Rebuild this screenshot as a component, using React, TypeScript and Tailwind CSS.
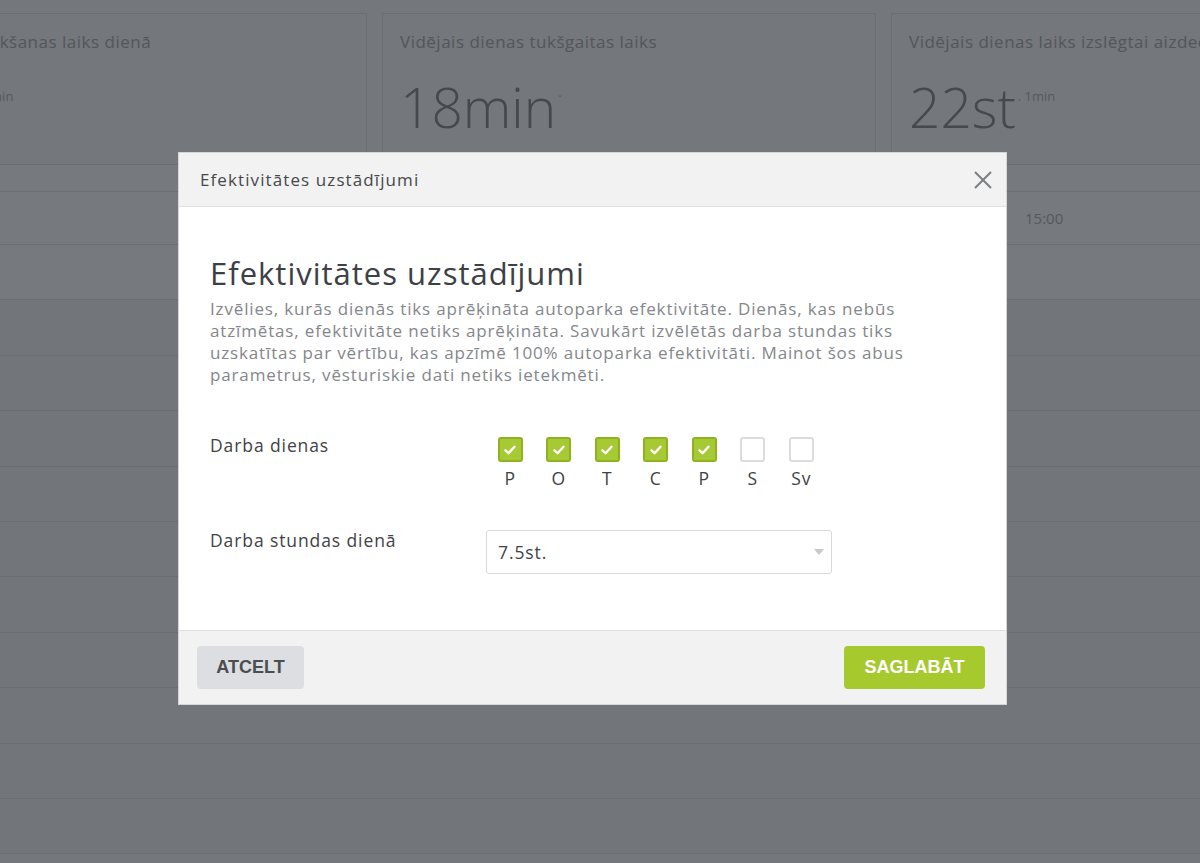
import React from 'react';

type StatCardProps = {
  title: string;
  value: string;
  sup: string;
  className?: string;
};

function StatCard({ title, value, sup, className = '' }: StatCardProps) {
  return (
    <div className={`h-[152px] w-[494px] shrink-0 border border-[#6a6d72] px-[17px] pt-[16px] ${className}`}>
      <div className="text-[17px] leading-[24px] tracking-[0.5px] text-[#53565b]">{title}</div>
      <div className="mt-[21px] flex items-start">
        <span className="text-[55px] font-light leading-[64px] text-[#45484d]">{value}</span>
        <span className="mt-[12px] ml-[2px] text-[13px] text-[#56595e]">{sup}</span>
      </div>
    </div>
  );
}

const days = [
  { label: 'P', on: true },
  { label: 'O', on: true },
  { label: 'T', on: true },
  { label: 'C', on: true },
  { label: 'P', on: true },
  { label: 'S', on: false },
  { label: 'Sv', on: false },
];

function DayBox({ label, on }: { label: string; on: boolean }) {
  return (
    <div className="flex w-[48.5px] flex-col items-center">
      {on ? (
        <div className="flex h-[25px] w-[25px] items-center justify-center rounded-[3px] border-2 border-[#8db320] bg-[#a6c934]">
          <svg width="14" height="14" viewBox="0 0 14 14" fill="none">
            <path d="M2.5 7.3 L5.6 10.2 L11.5 3.8" stroke="white" strokeWidth="2.4" strokeLinecap="round" strokeLinejoin="round" />
          </svg>
        </div>
      ) : (
        <div className="h-[25px] w-[25px] rounded-[3px] border-2 border-[#dcdcdc] bg-white" />
      )}
      <span className="mt-[4px] text-[17.5px] leading-[24px] tracking-[0.9px] text-[#3f4246]">{label}</span>
    </div>
  );
}

export default function App() {
  const rows = Array.from({ length: 11 });

  return (
    <div className="relative h-[863px] w-[1200px] overflow-hidden bg-[#74777c] font-['Open_Sans',sans-serif]">
      {/* background dashboard */}
      <div className="flex gap-[15px] pt-[13px] ml-[-127px]">
        <StatCard title="Vidējais braukšanas laiks dienā" value="3st" sup=". 41min" />
        <StatCard title="Vidējais dienas tukšgaitas laiks" value="18min" sup="·" />
        <StatCard title="Vidējais dienas laiks izslēgtai aizdedzei" value="22st" sup=". 1min" />
      </div>
      <div className="h-[27px] border-b border-[#6a6d72] bg-[#76797e]" />
      <div className="flex h-[53px] items-center border-b border-[#6a6d72] bg-[#76797e] pl-[1025px] text-[15px] text-[#55585c]">
        15:00
      </div>
      {rows.map((_, i) => (
        <div key={i} className={`h-[55.4px] border-b border-[#6a6d72] ${i === 0 ? 'bg-[#76797e]' : 'bg-[#72757a]'}`} />
      ))}

      {/* modal */}
      <div className="absolute inset-0">
        <div className="ml-[178px] mt-[152px] w-[829px] border border-[#d6d6d6] bg-white">
          <div className="flex h-[54px] items-center justify-between border-b border-[#e0e0e0] bg-[#f2f2f2] pl-[21px] pr-[13px]">
            <span className="text-[17px] tracking-[1.1px] text-[#45484c]">Efektivitātes uzstādījumi</span>
            <svg width="20" height="20" viewBox="0 0 20 20" fill="none">
              <path d="M2 2 L18 18 M18 2 L2 18" stroke="#7c7f83" strokeWidth="2" />
            </svg>
          </div>

          <div className="px-[31px] pt-[46px] pb-[56px]">
            <h1 className="text-[31px] leading-[40px] tracking-[1px] text-[#3d4045]">Efektivitātes uzstādījumi</h1>
            <p className="mt-[5px] w-[720px] text-[17px] leading-[22px] tracking-[0.85px] text-[#84878b]">
              Izvēlies, kurās dienās tiks aprēķināta autoparka efektivitāte. Dienās, kas nebūs atzīmētas, efektivitāte netiks aprēķināta. Savukārt izvēlētās darba stundas tiks uzskatītas par vērtību, kas apzīmē 100% autoparka efektivitāti. Mainot šos abus parametrus, vēsturiskie dati netiks ietekmēti.
            </p>

            <div className="mt-[47px] flex">
              <div className="w-[276px] text-[17.5px] leading-[24px] tracking-[0.9px] text-[#3f4246]">Darba dienas</div>
              <div className="flex pt-[4px]">
                {days.map((d, i) => (
                  <DayBox key={i} label={d.label} on={d.on} />
                ))}
              </div>
            </div>

            <div className="mt-[38px] flex">
              <div className="w-[276px] text-[17.5px] leading-[24px] tracking-[0.9px] text-[#3f4246]">Darba stundas dienā</div>
              <div className="mt-[2px] flex h-[44px] w-[346px] items-center justify-between rounded-[3px] border border-[#dadada] bg-white pl-[11px] pr-[6px]">
                <span className="text-[17.5px] tracking-[0.9px] text-[#3f4246]">7.5st.</span>
                <svg width="12" height="8" viewBox="0 0 12 8">
                  <path d="M1 1 L11 1 L6 7 Z" fill="#c9c9c9" />
                </svg>
              </div>
            </div>
          </div>

          <div className="flex h-[74px] items-center justify-between border-t border-[#e0e0e0] bg-[#f2f2f2] pl-[18px] pr-[21px]">
            <button className="h-[43px] w-[107px] rounded-[4px] bg-[#dcdee1] font-['Liberation_Sans',sans-serif] text-[18px] font-bold text-[#4a4d52]">
              ATCELT
            </button>
            <button className="h-[43px] w-[141px] rounded-[4px] bg-[#a6c92e] font-['Liberation_Sans',sans-serif] text-[18px] font-bold text-white">
              SAGLABĀT
            </button>
          </div>
        </div>
      </div>
    </div>
  );
}
